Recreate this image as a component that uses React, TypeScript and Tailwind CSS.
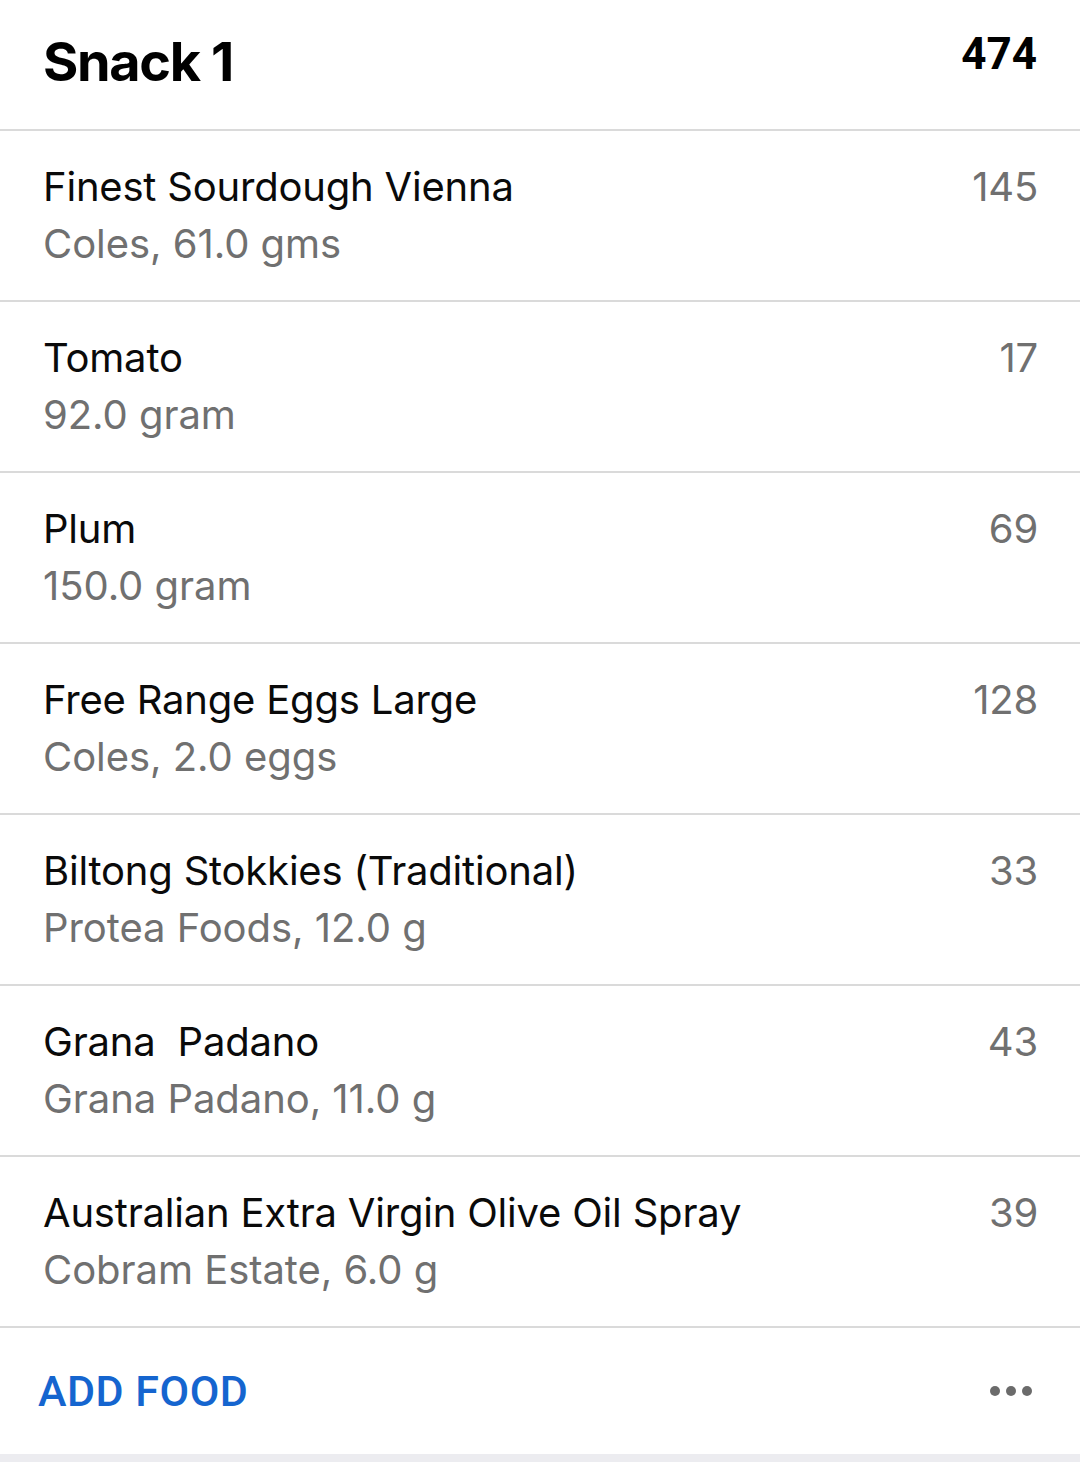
import React from "react";

const items = [
  { name: "Finest Sourdough Vienna", detail: "Coles, 61.0 gms", cal: 145 },
  { name: "Tomato", detail: "92.0 gram", cal: 17 },
  { name: "Plum", detail: "150.0 gram", cal: 69 },
  { name: "Free Range Eggs Large", detail: "Coles, 2.0 eggs", cal: 128 },
  { name: "Biltong Stokkies (Traditional)", detail: "Protea Foods, 12.0 g", cal: 33 },
  { name: "Grana  Padano", detail: "Grana Padano, 11.0 g", cal: 43 },
  { name: "Australian Extra Virgin Olive Oil Spray", detail: "Cobram Estate, 6.0 g", cal: 39 },
];

export default function App() {
  return (
    <div className="w-[1080px] h-[1462px] bg-white flex flex-col overflow-hidden" style={{ fontFamily: "Inter, 'Noto Sans', sans-serif" }}>
      <div className="h-[129px] flex justify-between items-start px-[43px] border-b-2 border-[#dadada] box-content">
        <div className="pt-[35px] text-[54px] leading-[54px] font-bold tracking-[-0.025em] text-black whitespace-pre">Snack 1</div>
        <div className="pt-[32px] text-[44px] leading-[45px] font-bold text-black" style={{ fontFamily: "Roboto, 'Liberation Sans', sans-serif" }}>474</div>
      </div>
      {items.map((it) => (
        <div key={it.name} className="flex justify-between items-start pl-[43px] pr-[42px] pt-[27px] pb-[28px] border-b-2 border-[#dadada]">
          <div className="flex flex-col text-[40px] leading-[57px]">
            <span className="text-[#0a0a0a] whitespace-pre tracking-[-0.2px]">{it.name}</span>
            <span className="text-[#707070] tracking-[-0.05px]">{it.detail}</span>
          </div>
          <div className="text-[40px] leading-[57px] text-[#707070] tracking-[-0.2px]">{it.cal}</div>
        </div>
      ))}
      <div className="h-[126px] flex items-center justify-between pl-[38px] pr-[48px]">
        <div className="text-[43px] leading-none font-medium tracking-[0.5px] text-[#1565cf]" style={{ fontFamily: "Roboto, 'Liberation Sans', sans-serif" }}>ADD FOOD</div>
        <div className="flex gap-[6px] items-center">
          <span className="w-[10px] h-[10px] rounded-full bg-[#6b6b6b]" />
          <span className="w-[10px] h-[10px] rounded-full bg-[#6b6b6b]" />
          <span className="w-[10px] h-[10px] rounded-full bg-[#6b6b6b]" />
        </div>
      </div>
      <div className="flex-1 bg-[#ececf0]" />
    </div>
  );
}
